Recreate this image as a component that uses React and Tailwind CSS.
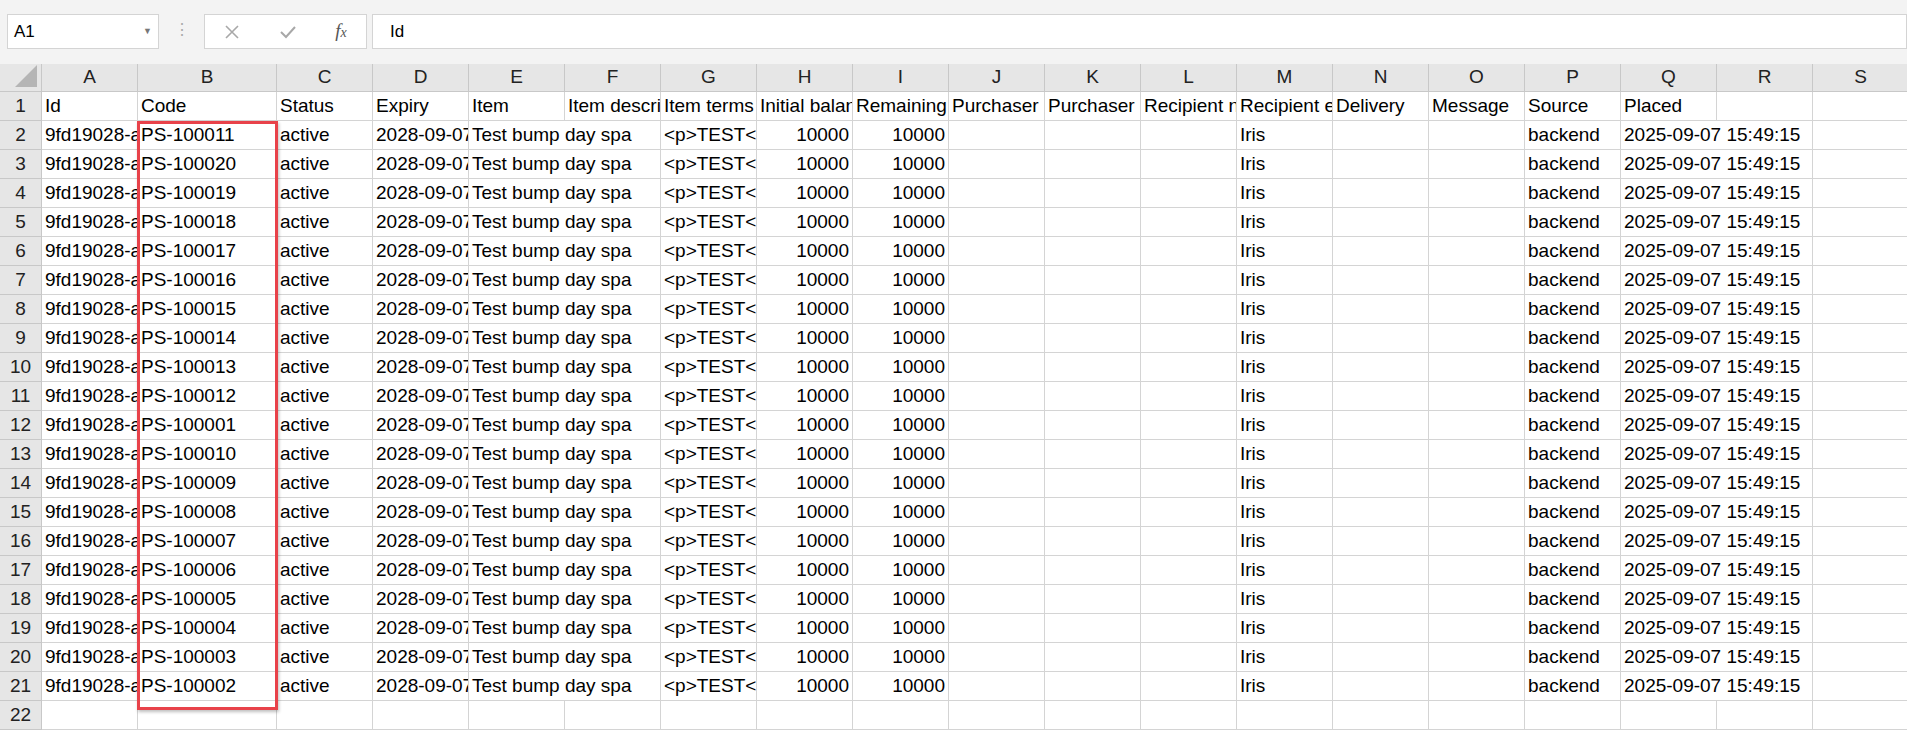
import React from 'react';

const COLS = ['A','B','C','D','E','F','G','H','I','J','K','L','M','N','O','P','Q','R','S'];
const W = [96,139,96,96,96,96,96,96,96,96,96,96,96,96,96,96,96,96,96];
const HEAD = ['Id','Code','Status','Expiry','Item','Item description','Item terms','Initial balance','Remaining balance','Purchaser name','Purchaser email','Recipient name','Recipient email','Delivery','Message','Source','Placed','',''];
const CODES = ['11','20','19','18','17','16','15','14','13','12','01','10','09','08','07','06','05','04','03','02'];
const OVER = [4, 16];

function rowCells(code) {
  return ['9fd19028-a3c1-4b2e','PS-1000' + code,'active','2028-09-07','Test bump day spa','','<p>TEST</p>','10000','10000','','','','Iris','','','backend','2025-09-07 15:49:15','',''];
}

function Cell({ w, children, right, over }) {
  return (
    <div style={{ width: w }} className={`shrink-0 h-[29px] border-r border-b border-[#d4d4d4] px-[3px] flex items-center whitespace-nowrap ${over ? 'overflow-visible relative z-10' : 'overflow-hidden'} ${right ? 'justify-end' : ''}`}>
      {children}
    </div>
  );
}

export default function App() {
  const rows = [HEAD, ...CODES.map(rowCells), Array(19).fill('')];
  return (
    <div className="w-[1907px] h-[737px] overflow-hidden bg-white text-[19px] text-black" style={{ fontFamily: '"Liberation Sans", Arial, sans-serif' }}>
      <div className="h-[64px] bg-[#f3f3f3] flex items-start pt-[14px] pl-[7px]">
        <div className="w-[152px] h-[35px] bg-white border border-[#d4d4d4] flex items-center justify-between px-[6px] text-[17px]">
          <span>A1</span><span className="text-[9px] text-[#777]">▼</span>
        </div>
        <div className="w-[45px] flex justify-center text-[#aaa] text-[16px] pt-[4px]">⋮</div>
        <div className="w-[163px] h-[35px] bg-white border border-[#d4d4d4] flex items-center justify-around text-[#a8a8a8]">
          <svg width="16" height="16" viewBox="0 0 16 16"><path d="M2 2 L14 14 M14 2 L2 14" stroke="#a8a8a8" strokeWidth="1.6" /></svg>
          <svg width="18" height="16" viewBox="0 0 18 16"><path d="M2 8 L7 13 L16 3" stroke="#a8a8a8" strokeWidth="2" fill="none" /></svg>
          <span className="italic text-[#555] text-[19px]" style={{ fontFamily: '"Liberation Serif", serif' }}>f<span className="text-[14px]">x</span></span>
        </div>
        <div className="ml-[5px] flex-1 h-[35px] bg-white border border-[#d4d4d4] flex items-center pl-[17px] text-[17px]">Id</div>
      </div>
      <div className="relative">
        <div className="flex h-[28px] bg-[#e6e6e6]">
          <div className="w-[42px] shrink-0 border-r border-b border-[#c8c8c8] relative">
            <svg className="absolute right-[4px] bottom-[4px]" width="22" height="22" viewBox="0 0 22 22"><path d="M22 0 L22 22 L0 22 Z" fill="#b5b5b5" /></svg>
          </div>
          {COLS.map((c, i) => (
            <div key={c} style={{ width: W[i] }} className="shrink-0 border-r border-b border-[#c8c8c8] flex items-center justify-center text-[#222]">{c}</div>
          ))}
        </div>
        {rows.map((r, ri) => (
          <div key={ri} className="flex">
            <div className="w-[42px] shrink-0 h-[29px] bg-[#e6e6e6] border-r border-b border-[#c8c8c8] flex items-center justify-center text-[#222]">{ri + 1}</div>
            {r.map((v, ci) => (
              <Cell key={ci} w={W[ci]} right={ri > 0 && (ci === 7 || ci === 8)} over={ri > 0 && OVER.includes(ci)}>
                {ri > 0 && OVER.includes(ci) ? <span className="bg-white">{v}</span> : v}
              </Cell>
            ))}
          </div>
        ))}
        <div className="absolute z-20 left-[137px] top-[57px] w-[141px] h-[589px] border-[3px] border-[#e8424a] shadow-[1px_2px_3px_rgba(0,0,0,0.25)] pointer-events-none" />
      </div>
    </div>
  );
}
